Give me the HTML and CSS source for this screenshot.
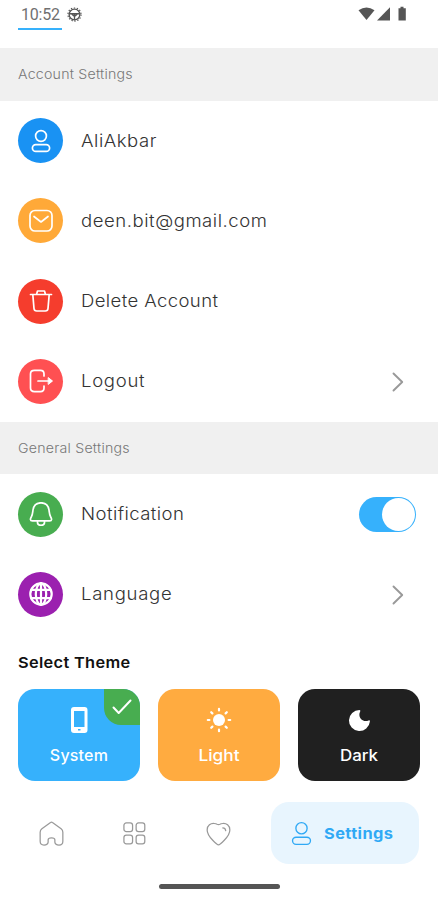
FILE: index.html
```html
<!DOCTYPE html>
<html lang="en">
<head>
<meta charset="utf-8">
<title>Settings</title>
<link rel="stylesheet" href="styles.css">
</head>
<body>
<svg class="defs" width="0" height="0">
  <symbol id="user" viewBox="0 0 24 24"><circle cx="12" cy="7" r="5.4"/><rect x="3.4" y="15.6" width="17.2" height="6.8" rx="3.4"/></symbol>
  <symbol id="chevron" viewBox="0 0 12 20"><path d="M1.5 1.5 10.2 10 1.5 18.5"/></symbol>
</svg>
<main class="screen">
  <header class="status">
    <span class="clock">10:52</span>
    <svg class="wheel" viewBox="0 0 16 16"><circle cx="8" cy="8" r="5.7"/><circle class="teeth" cx="8" cy="8" r="7"/><path d="M2.5 7.2h11M8 7.5v6M5.5 8l2.5 2 2.5-2"/></svg>
    <svg class="signals" viewBox="0 0 50 16"><path d="M1.500 4.200Q9.500-1.400 17.500 4.200L9.500 14Z"/><path d="M33 1.200V14.500H20Z"/><path d="M41.5 2.200h2V.8h3v1.400h2.300V14.500h-7.300Z"/></svg>
  </header>
  <h2 class="section"><span class="wide t-account">Account Settings</span></h2>
  <ul class="rows">
    <li class="row"><span class="badge blue"><svg><use href="#user"/></svg></span><span class="label wide t-name">AliAkbar</span></li>
    <li class="row"><span class="badge orange"><svg viewBox="0 0 24 24"><rect x="1" y="1.5" width="22" height="20.5" rx="5"/><path d="m5 7.5 7 5.5 7-5.5"/></svg></span><span class="label wide t-mail">deen.bit@gmail.com</span></li>
    <li class="row"><span class="badge red"><svg viewBox="0 0 24 24"><path d="M1.500 5.500h21M7.500 5.500l1-3.500h7l1 3.500M3.800 5.500l1.200 14Q5.200 22 7.700 22h8.600Q18.800 22 19 19.500L20.200 5.500"/></svg></span><span class="label wide t-delete">Delete Account</span></li>
    <li class="row"><span class="badge coral"><svg viewBox="0 0 24 24"><path d="M15 7V5Q15 1.4 11.5 1.4h-6Q1.500 1.400 1.500 5v14q0 3.600 4 3.600h6q3.500 0 3.500-3.600v-2M9 12h13"/><path class="solid" d="m19.500 8.800 4 3.200-4 3.200Z"/></svg></span><span class="label wide t-logout">Logout</span><svg class="chevron"><use href="#chevron"/></svg></li>
  </ul>
  <h2 class="section"><span class="wide t-general">General Settings</span></h2>
  <ul class="rows">
    <li class="row"><span class="badge green"><svg viewBox="0 0 24 24"><path d="M3.400 18.800C.6 18.800 1.300 16.500 2.400 14.700 3.600 12.700 3.600 11 4 8 4.700 3.400 7.800.8 12 .8s7.300 2.600 8 7.200c.4 3 .4 4.700 1.600 6.700 1.100 1.800 1.800 4.100-1 4.100ZM8.500 19v1.500q0 2.800 3.500 2.800t3.500-2.800V19"/></svg></span><span class="label wide t-notification">Notification</span><span class="toggle"><i></i></span></li>
    <li class="row"><span class="badge purple"><svg class="globe" viewBox="0 0 24 24"><circle cx="12" cy="12" r="10.700"/><ellipse cx="12" cy="12" rx="5.200" ry="10.700"/><path d="M12 1v22M2.500 7.800h19M2.500 16.200h19"/></svg></span><span class="label wide t-language">Language</span><svg class="chevron"><use href="#chevron"/></svg></li>
  </ul>
  <section class="themes">
    <h3><span class="wide t-theme">Select Theme</span></h3>
    <div class="cards">
      <div class="card system"><svg viewBox="0 0 26 26"><path fill-rule="evenodd" d="M8 0h10.500q3 0 3 3v20q0 3-3 3H8q-3 0-3-3V3q0-3 3-3ZM8 4v16h10.500V4ZM12 22v1.500h2.500V22Z"/></svg><span class="t-system">System</span><b class="check"><svg viewBox="0 0 20 16"><path d="m1.500 8.500 5.200 5.500L18.500 1.500"/></svg></b></div>
      <div class="card light"><svg viewBox="0 0 26 26"><circle cx="13" cy="13" r="6"/><g class="rays"><path d="M13 1.800v1.600M13 22.600v1.600M1.800 13h1.600M22.600 13h1.600M5.200 5.200l1.200 1.200M19.600 19.600l1.200 1.200M5.200 20.800l1.200-1.200M19.600 6.400l1.200-1.200"/></g></svg><span class="t-light">Light</span></div>
      <div class="card dark"><svg viewBox="0 0 26 26"><path d="M13.500 3A10.500 10.500 0 1 0 23.900 14.500Q24 12.800 22.500 13.500C17.500 16 11 10.500 14.200 4.500Q14.800 3.100 13.500 3Z"/></svg><span class="t-dark">Dark</span></div>
    </div>
  </section>
  <nav class="nav">
    <svg viewBox="0 0 26 26"><path d="M12 1.500q1-.8 2 0l9 6.600q1.800 1.300 1.800 3.500V21q0 4-4 4t-4.300-3v-2.500Q16.500 17.500 13 17.500t-3.500 2V22q-.3 3-4.300 3t-4-4v-9.400q0-2.200 1.800-3.500Z"/></svg>
    <svg viewBox="0 0 26 26"><rect x="2" y="2" width="9" height="9" rx="2.500"/><rect x="14.700" y="2" width="9" height="9" rx="2.500"/><rect x="2" y="14.700" width="9" height="9" rx="2.500"/><rect x="14.700" y="14.700" width="9" height="9" rx="2.500"/></svg>
    <svg viewBox="0 0 26 26"><path d="M13 24.800Q11.500 24.800 7 20 1.200 14 1.200 9.300C1.200 4.500 5 2.200 8.500 2.600q2 .2 3 .8 1.500.7 3 0 1-.6 3-.8c3.500-.4 7.300 1.900 7.300 6.700Q24.800 14 19 20q-4.500 4.800-6 4.800ZM17.500 7.200q2.500 0 3 2.800"/></svg>
    <a class="active"><svg><use href="#user"/></svg><span class="wide t-settings">Settings</span></a>
  </nav>
  <div class="home-bar"></div>
</main>
</body>
</html>
```
FILE: styles.css
```css
* { box-sizing: border-box; }
body { margin: 0; background: #fff; font-family: Inter, "Liberation Sans", sans-serif; color: #333; }
h2, h3, ul { margin: 0; padding: 0; list-style: none; }
svg { display: block; flex: none; fill: none; stroke: currentColor; stroke-linecap: round; stroke-linejoin: round; }
.defs { position: absolute; }
.screen { width: 438px; height: 900px; overflow: hidden; display: flex; flex-direction: column; }

.status { height: 48px; padding: 0 31px 0 18px; display: flex; align-items: flex-start; color: #555; }
.clock { height: 30px; width: 44px; padding: 5px 0 0 3px; border-bottom: 2px solid #36b1fc; font: 400 16px/20px Roboto, sans-serif; letter-spacing: -.2px; color: #707070; white-space: nowrap; }
.wheel { width: 15px; height: 15px; margin: 7px 0 0 5px; stroke-width: 1.4; }
.teeth { stroke-dasharray: 1.5 1.7; stroke-width: 1.2; stroke-linecap: butt; }
.signals { width: 50px; height: 16px; margin: 6px 0 0 auto; fill: #555; stroke: none; }

.section { flex: none; height: 52.5px; padding-left: 18px; background: #f0f0f0; display: flex; align-items: center; font-size: 13px; font-weight: 300; color: #777; }
.row { height: 80.250px; padding: 0 22px 0 18px; display: flex; align-items: center; }
.badge { width: 45px; height: 45px; margin-right: 18px; border-radius: 50%; display: flex; align-items: center; justify-content: center; color: #fff; }
.badge svg { width: 24px; height: 24px; stroke-width: 1.700; }
.blue { background: #1992f3; }
.orange { background: #ffa938; }
.red { background: #f53d2d; }
.coral { background: #ff5052; }
.green { background: #48ad50; }
.purple { background: #9b20af; }
.badge .solid { fill: #fff; stroke-width: 1; }
.badge .globe { stroke-width: 2.200; }
.label { font-size: 17px; font-weight: 300; white-space: nowrap; }
.chevron { width: 12px; height: 20px; margin: 1px 12px 0 auto; color: #999; stroke-width: 1.900; }
.toggle { width: 57px; height: 35px; margin-left: auto; padding: 1px; border-radius: 18px; background: #36b1fc; display: flex; justify-content: flex-end; }
.toggle i { width: 33px; height: 33px; border-radius: 50%; background: #fff; }

/* Wide letterforms with light tracking */
.wide { display: inline-block; transform: scaleX(1.09); transform-origin: left center; }
.t-account { letter-spacing: .2px; }
.t-general { letter-spacing: .2px; }
.t-name { letter-spacing: .5px; }
.t-mail { letter-spacing: .5px; }
.t-delete { letter-spacing: .36px; }
.t-logout { letter-spacing: .650px; }
.t-notification { letter-spacing: .4px; }
.t-language { letter-spacing: .650px; }
.t-theme { letter-spacing: .3px; }
.t-system { letter-spacing: .2px; }
.t-light { transform: scaleX(1.080); }
.t-dark { transform: scaleX(1.060); }
.t-settings { letter-spacing: .4px; padding-top: 2px; }

.themes { padding: 18px 18px 0; }
.themes h3 { height: 36px; font-size: 15px; line-height: 20px; font-weight: 600; color: #111; }
.cards { display: grid; grid-template-columns: repeat(3, 122px); gap: 18px; }
.card { position: relative; height: 92px; padding-top: 18.500px; border-radius: 17px; overflow: hidden; display: flex; flex-direction: column; align-items: center; gap: 12px; color: #fff; font-size: 16px; line-height: 20px; font-weight: 500; }
.card > svg { width: 26px; height: 26px; fill: currentColor; stroke: none; }
.card .rays { stroke: #fff; stroke-width: 2.200; }
.system { background: #36b1fc; }
.light { background: #ffab40; }
.dark { background: #202020; }
.check { position: absolute; top: 0; right: 0; width: 36px; height: 36px; border-bottom-left-radius: 17px; background: #48ad50; display: flex; align-items: center; justify-content: center; }
.check svg { width: 20px; height: 16px; stroke-width: 2; }

.nav { height: 62px; margin-top: 21px; padding: 0 19px 0 39px; display: flex; align-items: center; color: #999; }
.nav > svg { width: 25px; height: 25px; margin: 2px 58px 0 0; stroke-width: 1.300; }
.nav > svg:nth-of-type(3) { margin-right: auto; margin-left: 1px; }
.active { width: 148px; height: 62px; padding-left: 18px; border-radius: 18px; background: #e8f5fe; display: flex; align-items: center; gap: 10px; color: #30a9f5; font-size: 15px; font-weight: 700; }
.active svg { width: 25px; height: 25px; margin-top: 2px; stroke-width: 1.300; }
.home-bar { width: 121px; height: 5px; margin: 20px auto 0; border-radius: 3px; background: #555; }
```
